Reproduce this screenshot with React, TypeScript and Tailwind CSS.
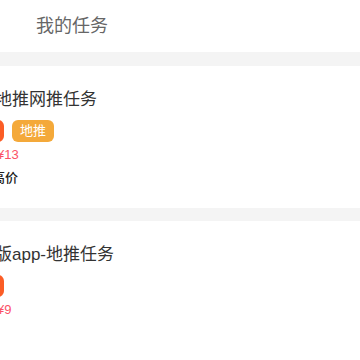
const font = { fontFamily: '"Liberation Sans", "Noto Sans CJK SC", sans-serif' };

type Task = {
  title: string;
  tags: { text: string; color: string }[];
  price: string;
  note?: string;
};

const tasks: Task[] = [
  {
    title: '地推网推任务',
    tags: [
      { text: '网推', color: 'bg-[#fb5d26]' },
      { text: '地推', color: 'bg-[#f4a93a]' },
    ],
    price: '¥13',
    note: '高价',
  },
  {
    title: '版app-地推任务',
    tags: [{ text: '网推', color: 'bg-[#fb5d26]' }],
    price: '¥9',
  },
];

function TaskCard({ task }: { task: Task }) {
  return (
    <div className="bg-white pt-[22px] pb-[21px]">
      <div className="-ml-[5px] flex flex-col">
        <div className="text-[17px] leading-[24px] text-[#333] whitespace-nowrap">{task.title}</div>
        <div className="-ml-[33px] mt-[8px] flex gap-[8px]">
          {task.tags.map((t) => (
            <span
              key={t.text}
              className={`${t.color} h-[22px] px-[8px] rounded-[6px] text-white text-[13px] leading-[22px]`}
            >
              {t.text}
            </span>
          ))}
        </div>
        <div className="ml-[2px] mt-[4px] text-[13px] leading-[18px] font-medium text-[#fb5266]">{task.price}</div>
        {task.note && (
          <div className="-ml-[3px] mt-[5px] text-[13px] leading-[18px] font-medium text-[#222]">{task.note}</div>
        )}
      </div>
    </div>
  );
}

export default function App() {
  return (
    <div className="min-h-screen bg-white" style={font}>
      <div className="h-[52px] flex items-center pl-[36px] text-[18px] text-[#666]">我的任务</div>
      <div className="h-[14px] bg-[#f4f4f4]" />
      <TaskCard task={tasks[0]} />
      <div className="h-[13px] bg-[#f4f4f4]" />
      <TaskCard task={tasks[1]} />
    </div>
  );
}
